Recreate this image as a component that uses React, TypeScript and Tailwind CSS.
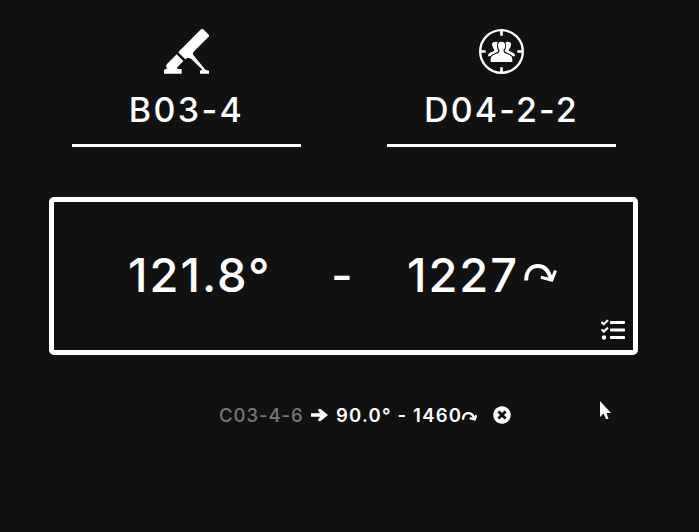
import React from "react";
import { FaTasks, FaTimesCircle } from "react-icons/fa";

function MortarIcon() {
  return (
    <svg viewBox="42 27 135 135" className="h-[45px] w-[45px]" fill="white">
      <path d="M153 28 Q157 25 160 28 L176 44 Q179 48 175 51 L131 95 Q127 99 130 105 L166 149 L177 152 L177 161 L150 161 L150 152 L157 149 L124 117 Q119 113 112 114 L106 118 L86 98 Q85 96 88 93 Z" />
      <path d="M80 103 L100 123 L80 144 L84 147 L95 147 L95 161 L42 161 L42 149 L53 145 L50 143 Q46 138 51 132 Z" />
    </svg>
  );
}

function TargetIcon() {
  return (
    <svg viewBox="42 27 135 135" className="h-[45px] w-[45px]" fill="white">
      <circle cx="109.500" cy="94.500" r="64" fill="none" stroke="white" strokeWidth="7" />
      <path d="M109.500 30V47M109.500 142V159M45 94.500H62M157 94.500H174" stroke="white" strokeWidth="8" />
      <path d="M81 70 Q84 65 93 65 L99 68 Q94 76 98 88 L101 94 L87 101 Q80 105 77 109 L69 109 Q68 101 75 98 L87 93 Q89 91 86 86 Q80 80 81 70Z" />
      <path d="M138 70 Q135 65 126 65 L120 68 Q125 76 121 88 L118 94 L132 101 Q139 105 142 109 L150 109 Q151 101 144 98 L132 93 Q130 91 133 86 Q139 80 138 70Z" />
      <path
        d="M99 72 Q101 65 109.500 65 Q118 65 120 72 Q122 82 116 90 Q114 96 119 99 L134 105 Q142 109 142 117 L142 126 L77 126 L77 117 Q77 109 85 105 L100 99 Q105 96 103 90 Q97 82 99 72Z"
        stroke="#111" strokeWidth="5" paintOrder="stroke"
      />
    </svg>
  );
}

function TurnArrow({ className, stroke, head }: { className: string; stroke: number; head: number }) {
  return (
    <svg viewBox="0 0 33 19" className={className} fill="none" stroke="white">
      <path d="M2.200 16.500 C2.200 7 7 2 14 2 C21 2 25 7 27 15.500" strokeWidth={stroke} />
      <path d="M17 13.200 L27.800 16 L31.500 6.500" strokeWidth={head} />
    </svg>
  );
}

function Coordinate({ icon, children }: { icon: React.ReactNode; children: React.ReactNode }) {
  return (
    <div className="flex h-[118px] w-[229px] flex-col items-center border-b-[3px] border-white">
      {icon}
      <div className="mt-[14px] whitespace-nowrap text-[34px] font-medium leading-[44px]">{children}</div>
    </div>
  );
}

export default function App() {
  return (
    <main className="h-[532px] w-full overflow-hidden bg-[#111] pt-[29px] font-['Inter','Liberation_Sans',sans-serif] text-white">
      <div className="ml-[72px] flex gap-[86px]">
        <Coordinate icon={<MortarIcon />}>
          <span className="tracking-[2.400px]">B03-4</span>
        </Coordinate>
        <Coordinate icon={<TargetIcon />}>
          <span className="tracking-[2.100px]">D04-2-2</span>
        </Coordinate>
      </div>

      <section className="relative ml-[49px] mt-[50px] flex h-[158px] w-[589px] items-center rounded-[5px] border-[5px] border-white pb-[2px] pl-[74px] text-[47px] font-medium leading-[60px]">
        <span className="w-[203px] whitespace-nowrap tracking-[2px]">121.8°</span>
        <span className="w-[76px]">-</span>
        <span className="w-[117px] whitespace-nowrap tracking-[1.900px]">1227</span>
        <TurnArrow className="mb-[3px] h-[19px] w-[33px] shrink-0" stroke={4} head={3.2} />
        <FaTasks className="absolute bottom-[8px] right-[8px] size-6" />
      </section>

      <div className="ml-[219px] mt-[48px] flex h-6 items-center whitespace-nowrap text-[18.500px] leading-6">
        <span className="w-[92px] font-medium tracking-[0.950px] text-[#777]">C03-4-6</span>
        <svg viewBox="0 0 17 14" className="mr-[8px] h-[14px] w-[17px]">
          <path d="M0 5.200H9L7 2.300Q7.500 0 10 1.200L17 7L10 12.800Q7.500 14 7 11.700L9 8.800H0Z" fill="white" />
        </svg>
        <span className="w-[126px] font-semibold tracking-[1.200px]">90.0° - 1460</span>
        <TurnArrow className="mt-[3px] h-[9px] w-[15px] shrink-0" stroke={5.2} head={5} />
        <FaTimesCircle className="ml-[16px] size-[18px]" />
      </div>

      <svg viewBox="0 0 12 20" className="absolute left-[599px] top-[400px] h-5 w-3">
        <path d="M1 1V17L4.500 13.500L7 19H9.500L7.500 13H12Z" fill="white" />
      </svg>
    </main>
  );
}
